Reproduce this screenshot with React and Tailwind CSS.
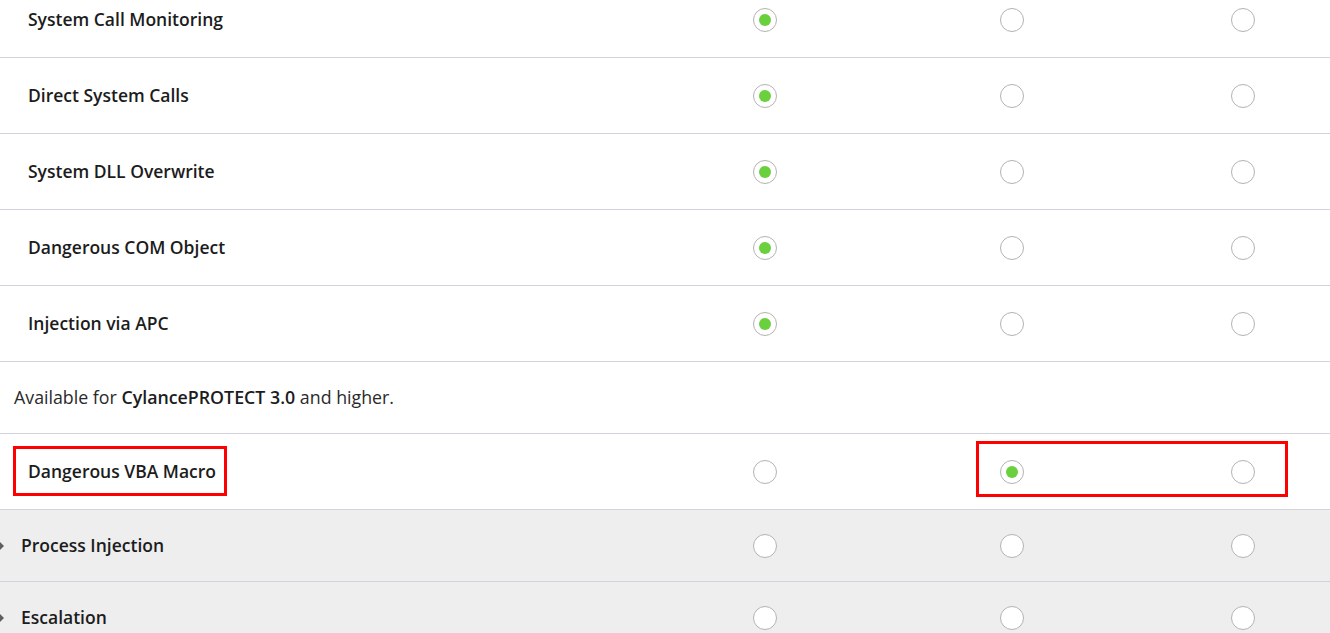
import React from "react";

const Radio = ({ checked }) => (
  <span className="inline-flex h-6 w-6 items-center justify-center rounded-full border border-[#b3b3b3] bg-white">
    {checked && <span className="h-3 w-3 rounded-full bg-[#6ad03e]" />}
  </span>
);

const Row = ({ label, sel, h = "h-[76px]", gray, caret, labelPad = "pl-[28px]", boxLabel, boxRadios }) => (
  <div className={`relative grid grid-cols-[641px_248px_246px_1fr] items-center border-b border-[#d3d3dd] ${h} ${gray ? "bg-[#eeeeee]" : "bg-white"}`}>
    <div className={`relative ${labelPad} text-[17.5px] font-[560] text-[#1c1c1c]`}>
      {caret && (
        <span className="absolute left-0 top-1/2 -translate-y-1/2 h-0 w-0 border-y-[4px] border-l-[4px] border-y-transparent border-l-[#5e5e5e]" />
      )}
      {label}
    </div>
    <div className="flex justify-center"><Radio checked={sel === 0} /></div>
    <div className="flex justify-center"><Radio checked={sel === 1} /></div>
    <div className="flex pl-[96px]"><Radio checked={sel === 2} /></div>
    {boxLabel && (
      <div className="pointer-events-none absolute left-[13px] top-[12px] h-[50px] w-[214px] border-[3px] border-[#ff0000]" />
    )}
    {boxRadios && (
      <div className="pointer-events-none absolute left-[976px] top-[7px] h-[56px] w-[312px] border-[3px] border-[#ff0000]" />
    )}
  </div>
);

export default function App() {
  return (
    <div className="h-[633px] w-[1330px] overflow-hidden bg-white" style={{ fontFamily: '"Open Sans", "Liberation Sans", sans-serif' }}>
      <div className="-mt-[18px]">
        <Row label="System Call Monitoring" sel={0} />
        <Row label="Direct System Calls" sel={0} />
        <Row label="System DLL Overwrite" sel={0} />
        <Row label="Dangerous COM Object" sel={0} />
        <Row label="Injection via APC" sel={0} />
        <div className="flex h-[72px] items-center border-b border-[#d3d3dd] pl-[14px] text-[17.8px] text-[#2a2a2a]">
          <span>
            Available for <span className="font-[560] text-[#1c1c1c]">CylancePROTECT 3.0</span> and higher.
          </span>
        </div>
        <Row label="Dangerous VBA Macro" sel={1} boxLabel boxRadios />
        <Row label="Process Injection" h="h-[72px]" gray caret labelPad="pl-[21px]" />
        <Row label="Escalation" h="h-[72px]" gray caret labelPad="pl-[21px]" />
      </div>
    </div>
  );
}
